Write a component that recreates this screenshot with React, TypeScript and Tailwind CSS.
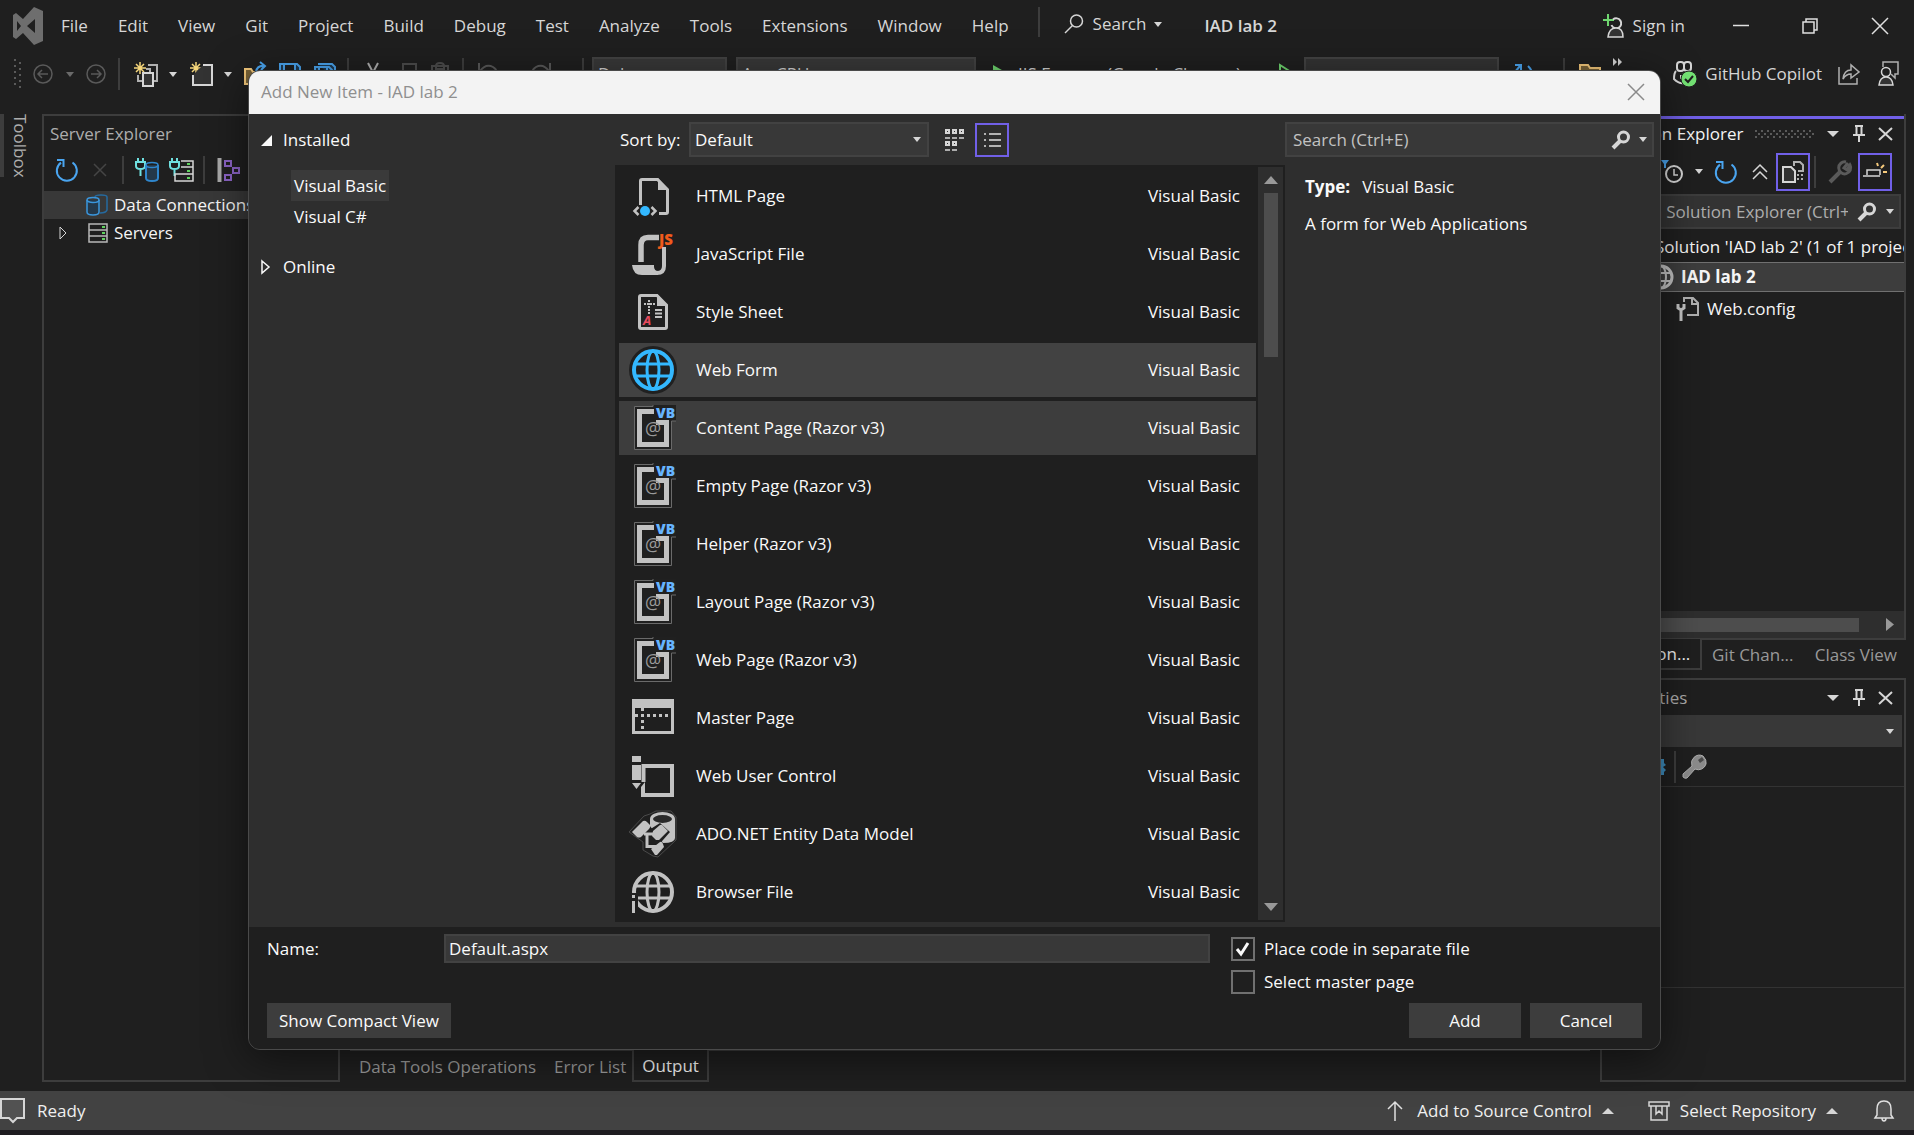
import { useState } from 'react';
import type { ReactNode } from 'react';

const menus = ['File', 'Edit', 'View', 'Git', 'Project', 'Build', 'Debug', 'Test', 'Analyze', 'Tools', 'Extensions', 'Window', 'Help'];

const templates = [
  { name: 'HTML Page', icon: 'html' },
  { name: 'JavaScript File', icon: 'js' },
  { name: 'Style Sheet', icon: 'css' },
  { name: 'Web Form', icon: 'form' },
  { name: 'Content Page (Razor v3)', icon: 'razor' },
  { name: 'Empty Page (Razor v3)', icon: 'razor' },
  { name: 'Helper (Razor v3)', icon: 'razor' },
  { name: 'Layout Page (Razor v3)', icon: 'razor' },
  { name: 'Web Page (Razor v3)', icon: 'razor' },
  { name: 'Master Page', icon: 'master' },
  { name: 'Web User Control', icon: 'control' },
  { name: 'ADO.NET Entity Data Model', icon: 'ado' },
  { name: 'Browser File', icon: 'browser' },
];

function Svg({ w, h, className, children }: { w: number; h: number; className?: string; children: ReactNode }) {
  return (
    <svg width={w} height={h} viewBox={`0 0 ${w} ${h}`} fill="none" className={`shrink-0 overflow-visible ${className ?? ''}`} aria-hidden="true">
      {children}
    </svg>
  );
}

function Caret({ color = '#d6d6d6', up = false, big = false }: { color?: string; up?: boolean; big?: boolean }) {
  const w = big ? 12 : 8;
  const h = big ? 6 : 5;
  return (
    <Svg w={w} h={h}>
      <path d={up ? `M0 ${h}H${w}L${w / 2} 0Z` : `M0 0H${w}L${w / 2} ${h}Z`} fill={color} />
    </Svg>
  );
}

function Sep({ className = 'h-8' }: { className?: string }) {
  return <div className={`w-[2px] shrink-0 bg-[#3d3d3d] ${className}`} />;
}

function Magnifier() {
  return (
    <Svg w={20} h={20}>
      <circle cx="12.5" cy="7" r="5" stroke="#d6d6d6" strokeWidth="3" />
      <path d="M9 11L2 18" stroke="#d6d6d6" strokeWidth="4" />
    </Svg>
  );
}

function Refresh() {
  return (
    <Svg w={24} h={24}>
      <path d="M17.5 4.5A10 10 0 1 1 6 4.6" stroke="#4aa5f0" strokeWidth="2" />
      <path d="M2 2H8.500V9" stroke="#4aa5f0" strokeWidth="2" />
    </Svg>
  );
}

function GlobeLines({ color, width }: { color: string; width: number }) {
  return (
    <g stroke={color} strokeWidth={width}>
      <circle cx="24" cy="24" r="19" strokeWidth="4" />
      <ellipse cx="24" cy="24" rx="6" ry="19" />
      <path d="M6 18H42M6 30H42" />
    </g>
  );
}

function TemplateIcon({ kind }: { kind: string }) {
  const c = '#c2c2c2';
  return (
    <Svg w={48} h={48}>
      {kind === 'html' && (
        <>
          <path d="M11.500 33V9Q11.500 7.500 13 7.500H28.500L38.500 17.500V40Q38.500 41.500 37 41.500H30" stroke={c} strokeWidth="3" />
          <path d="M29 6V18H40Z" fill={c} />
          <path d="M9.500 35L5.500 39L9.500 43M22.500 35L26.500 39L22.500 43" stroke={c} strokeWidth="2.500" />
          <circle cx="16" cy="39" r="5" fill="#33b8ff" />
        </>
      )}
      {kind === 'js' && (
        <>
          <path d="M12 32V15Q12 7.500 19 7.500H30" stroke={c} strokeWidth="5.500" />
          <path d="M35 17V36Q35 43 28 43" stroke={c} strokeWidth="4" />
          <path d="M3 35H25V37Q25.500 41 29 41V45H13Q4 45 3 35Z" fill={c} />
          <text x="30" y="15" fontSize="15" fontWeight="800" fill="#f05a1c">JS</text>
        </>
      )}
      {kind === 'css' && (
        <>
          <path d="M10.500 9Q10.500 7.500 12 7.500H28L37.500 17V39Q37.500 40.500 36 40.500H12Q10.500 40.500 10.500 39Z" stroke={c} strokeWidth="3" />
          <path d="M28 6V18H39Z" fill={c} />
          <path d="M15 16H27" stroke={c} strokeWidth="2" strokeDasharray="2 1" />
          <path d="M20 12V27" stroke={c} strokeWidth="2" strokeDasharray="2 1" />
          <path d="M26 22H33M26 25.500H33M26 29H33" stroke={c} strokeWidth="2" />
          <text x="14" y="37" fontSize="13" fontWeight="700" fontStyle="italic" fill="#e84a5f">A</text>
        </>
      )}
      {kind === 'form' && (
        <>
          <circle cx="24" cy="24" r="24" fill="#202020" />
          <GlobeLines color="#33b8ff" width={3} />
        </>
      )}
      {kind === 'razor' && (
        <>
          <path d="M24 2.500H5.500V45.500H42.500V17H47V1H24Z" fill="#202020" />
          <path d="M24 1V2.500H5.500V45.500H42.500V17H47" stroke="#6a6a6a" />
          <path d="M25 7.500H10.500V40.500H37.500V18.500H27" stroke={c} strokeWidth="5" />
          <text x="24" y="31" fontSize="18" textAnchor="middle" fill="#9a9a9a">@</text>
          <text x="27" y="14" fontSize="14" fontWeight="800" fill="#66b4ff">VB</text>
        </>
      )}
      {kind === 'master' && (
        <>
          <path d="M3 5H45V40H3ZM6 14V37H42V14Z" fill={c} fillRule="evenodd" />
          <path d="M6 21.500H41" stroke={c} strokeWidth="3" strokeDasharray="3 3" />
          <path d="M13.500 14V36" stroke={c} strokeWidth="3" strokeDasharray="3 3" />
        </>
      )}
      {kind === 'control' && (
        <>
          <path d="M3 4H12V10H3ZM3 13H12V28H3ZM3 31H12L7.500 37Z" fill={c} />
          <path d="M14.500 30V14H43V43H14V35" stroke={c} strokeWidth="4" />
          <path d="M12 35L16 30V45H12Z" fill={c} />
        </>
      )}
      {kind === 'ado' && (
        <>
          <path d="M0 22L15 6L21 4L27 1H42L47 7V30L29 47L24 46L14 40V32Z" stroke="#4a4a4a" />
          <path d="M21 9V16L34 33Q46 33 46 28V9Z" fill={c} />
          <ellipse cx="33.500" cy="9" rx="11" ry="5.500" fill="#2a2a2a" stroke={c} strokeWidth="3" />
          <path d="M20 31V20L31 13L41 22L27 38H18Z" fill="#202020" />
          <path d="M3 22L14 11Q16 10 18 12L21 15Q22 17 20 19L12 27Q10 28 8 27Z" fill={c} />
          <path d="M24 21L31 15Q33 14 34 16L39 21L30 30H27L23 26Z" fill={c} />
          <path d="M22 39L31 32Q33 31 34 34L35 37L28 45H26Z" fill={c} />
          <path d="M15 24H25M18 24V36.500H28" stroke={c} strokeWidth="3" />
        </>
      )}
      {kind === 'browser' && (
        <>
          <GlobeLines color={c} width={3} />
          <path d="M0 25H9V48H0Z" fill="#1f1f1f" />
          <path d="M3 27H6V30H3ZM3 33H6V45H3Z" fill={c} />
        </>
      )}
    </Svg>
  );
}

function PanelButtons() {
  return (
    <div className="flex items-center gap-3 pr-[11px]">
      <button aria-label="Window position" className="flex w-4 justify-center"><Caret big /></button>
      <button aria-label="Auto hide" className="flex w-3 justify-center">
        <Svg w={12} h={18}>
          <path d="M3.500 1V10M2 1H10M8.500 1V10M0 10H12M6 10V17" stroke="#d6d6d6" strokeWidth="2" />
        </Svg>
      </button>
      <button aria-label="Close" className="flex w-4 justify-center">
        <Svg w={15} h={14}><path d="M1 1L14 13M14 1L1 13" stroke="#d6d6d6" strokeWidth="2" /></Svg>
      </button>
    </div>
  );
}

function MenuBar() {
  return (
    <header className="flex h-[52px] items-center text-[#d6d6d6]">
      <Svg w={30} h={38} className="ml-[13px] mr-[3px]">
        <path d="M21 0L30 4V34L21 38L10 26L3 32L0 30V8L3 6L10 12ZM22 12L14 19L22 26ZM4 14V24L8 19Z" fill="#6e6e6e" fillRule="evenodd" />
      </Svg>
      <nav className="flex">
        {menus.map((m) => (
          <button key={m} className="px-[15px]">{m}</button>
        ))}
      </nav>
      <Sep className="-mt-2 ml-[14px] h-[30px]" />
      <button className="-mt-1 ml-6 flex items-center">
        <Svg w={20} h={20} className="mr-[9px]">
          <circle cx="12.500" cy="7" r="6" stroke="#d6d6d6" strokeWidth="1.500" />
          <path d="M8.500 11.500L1 19" stroke="#d6d6d6" strokeWidth="1.500" />
        </Svg>
        <span className="mr-2">Search</span>
        <Caret />
      </button>
      <span className="ml-[42px] font-semibold">IAD lab 2</span>
      <div className="ml-auto flex items-center">
        <button className="mr-[48px] flex items-center gap-2">
          <Svg w={22} h={24}>
            <path d="M5 0V12M0 6H11" stroke="#6fd66f" strokeWidth="2" />
            <path d="M10 5.500A5 5 0 1 1 8.500 11" stroke="#d6d6d6" strokeWidth="2" />
            <path d="M5 23Q6 14 13 14Q20 14 20 23Z" stroke="#d6d6d6" strokeWidth="1.500" fill="#333" />
          </Svg>
          Sign in
        </button>
        <button aria-label="Minimize" className="mr-[53px]"><Svg w={16} h={16}><path d="M0 7.500H16" stroke="#e0e0e0" strokeWidth="1.500" /></Svg></button>
        <button aria-label="Restore" className="mr-[53px]">
          <Svg w={17} h={17}><path d="M1 4H12V15H1ZM4 4V1H15V12H12" stroke="#e0e0e0" strokeWidth="1.500" /></Svg>
        </button>
        <button aria-label="Close window" className="mr-[26px]"><Svg w={16} h={16}><path d="M0 0L16 16M16 0L0 16" stroke="#e0e0e0" strokeWidth="1.500" /></Svg></button>
      </div>
    </header>
  );
}

function Toolbar() {
  return (
    <div className="flex h-[62px] text-[#d6d6d6]">
      <div className="flex h-[44px] w-[590px] shrink-0 items-center">
        <Svg w={8} h={30} className="ml-[14px] mr-[11px]">
          <path d="M1 0V30" stroke="#5a5a5a" strokeWidth="2" strokeDasharray="2 4" />
          <path d="M6 3V30" stroke="#5a5a5a" strokeWidth="2" strokeDasharray="2 4" />
        </Svg>
        <button aria-label="Navigate backward" className="mr-[13px]">
          <Svg w={20} h={20}><circle cx="10" cy="10" r="9" stroke="#5a5a5a" strokeWidth="1.500" /><path d="M15 10H5M9 6L5 10L9 14" stroke="#5a5a5a" strokeWidth="1.500" /></Svg>
        </button>
        <Caret color="#6a6a6a" />
        <button aria-label="Navigate forward" className="ml-3 mr-3">
          <Svg w={20} h={20}><circle cx="10" cy="10" r="9" stroke="#5a5a5a" strokeWidth="1.500" /><path d="M5 10H15M11 6L15 10L11 14" stroke="#5a5a5a" strokeWidth="1.500" /></Svg>
        </button>
        <Sep />
        <button aria-label="New project" className="ml-[14px] mr-[10px]">
          <Svg w={25} h={25}>
            <path d="M6 0V12M0 6H12M2 2L10 10M10 2L2 10" stroke="#f5d67b" strokeWidth="1.500" />
            <path d="M14 3H23V19H20M4 13V19H8" stroke="#b0b0b0" strokeWidth="2" />
            <path d="M12 7H16V10" stroke="#b0b0b0" strokeWidth="2" />
            <path d="M9 11H19V24H9Z" stroke="#d6d6d6" strokeWidth="2" fill="#333" />
          </Svg>
        </button>
        <Caret />
        <button aria-label="New item" className="ml-[13px] mr-[11px]">
          <Svg w={23} h={24}>
            <path d="M6 0V12M0 6H12M2 2L10 10M10 2L2 10" stroke="#f5d67b" strokeWidth="1.500" />
            <path d="M13 3H22V23H3V13" stroke="#d6d6d6" strokeWidth="2" fill="#333" />
          </Svg>
        </button>
        <Caret />
        <button aria-label="Open" className="ml-3 mr-[11px]">
          <Svg w={24} h={24}><path d="M1 22V7H7L9 10H16L12 22Z" stroke="#f5c97b" strokeWidth="2" fill="#7a6438" /><path d="M12 10Q13 3 21 4M16 0L21 4L17 8" stroke="#4aa5f0" strokeWidth="2" /></Svg>
        </button>
        <button aria-label="Save" className="mr-[13px]">
          <Svg w={22} h={22}><path d="M1 1H18L21 4V21H1ZM5 1V10H16V1" stroke="#4aa5f0" strokeWidth="2" fill="#1f3a52" /></Svg>
        </button>
        <button aria-label="Save all" className="mr-[11px]">
          <Svg w={22} h={22}><path d="M4 1H18L21 4V17M1 4H15L18 7V21H1ZM5 4V12H13V4" stroke="#4aa5f0" strokeWidth="2" fill="#1f3a52" /></Svg>
        </button>
        <Sep />
        <button aria-label="Cut" className="ml-[18px] mr-4"><Svg w={12} h={22}><path d="M1 0L9 15M11 0L3 15" stroke="#b0b0b0" strokeWidth="2" /></Svg></button>
        <button aria-label="Copy" className="mr-[14px]"><Svg w={22} h={22}><path d="M8 9V1H21V14H14M1 8H14V21H1Z" stroke="#4d4d4d" strokeWidth="2" /></Svg></button>
        <button aria-label="Paste" className="mr-[13px]"><Svg w={18} h={24}><path d="M1 4H17V23H1ZM5 4Q5 1 9 1T13 4V7H5Z" stroke="#4d4d4d" strokeWidth="2" /></Svg></button>
        <Sep />
        <button aria-label="Undo" className="ml-[14px] mr-[35px]"><Svg w={19} h={22}><path d="M1 0V9H10M2 8Q8 0 15 4T15 16L9 21" stroke="#5a5a5a" strokeWidth="2" /></Svg></button>
        <button aria-label="Redo" className="mr-[31px]"><Svg w={19} h={22}><path d="M18 0V9H9M17 8Q11 0 4 4T4 16L10 21" stroke="#5a5a5a" strokeWidth="2" /></Svg></button>
        <Sep />
      </div>
      <div className="flex h-[44px] min-w-0 flex-1 items-center">
        <select aria-label="Configuration" className="ml-[2px] h-[34px] w-[135px] appearance-none border-2 border-[#424242] bg-[#383838] pl-1 text-[#d6d6d6]"><option>Debug</option></select>
        <select aria-label="Platform" className="ml-[9px] h-[34px] w-[240px] appearance-none border-2 border-[#424242] bg-[#383838] pl-1 text-[#d6d6d6]"><option>Any CPU</option></select>
        <button className="ml-4 flex items-center whitespace-nowrap">
          <Svg w={18} h={22} className="mr-2"><path d="M1 2L17 11L1 21Z" fill="#6fd66f" /></Svg>
          IIS Express (Google Chrome)
        </button>
        <button aria-label="Start without debugging" className="ml-auto mr-2"><Svg w={18} h={22}><path d="M2 2L16 11L2 20Z" stroke="#6fd66f" strokeWidth="2" /></Svg></button>
        <select aria-label="Startup" className="mr-[14px] h-[34px] w-[195px] appearance-none border-2 border-[#424242] bg-[#333]" />
        <Svg w={22} h={22}><path d="M2 2H8V9M7 3L2 9M15 3Q22 10 18 19" stroke="#4aa5f0" strokeWidth="2" /></Svg>
        <Sep className="ml-[28px] mr-[14px] h-8" />
        <Svg w={22} h={22}><path d="M1 20V2H9L11 5H21V20Z" stroke="#f5c97b" strokeWidth="2" fill="#7a6438" /></Svg>
        <Svg w={10} h={8} className="mb-6 ml-3 mr-[50px]"><path d="M0 0L4 4L0 8ZM5 0L9 4L5 8Z" fill="#d6d6d6" /></Svg>
      </div>
      <div className="flex h-[44px] items-center pr-[14px]">
        <button className="flex items-center gap-2">
          <Svg w={24} h={28}>
            <rect x="4" y="2" width="7" height="9" rx="3" stroke="#d6d6d6" strokeWidth="2" />
            <rect x="11" y="2" width="7" height="9" rx="3" stroke="#d6d6d6" strokeWidth="2" />
            <path d="M3 11Q1 13 1 19Q6 24 11 23M8 15V19" stroke="#d6d6d6" strokeWidth="2" />
            <circle cx="16" cy="19" r="8" fill="#74e374" stroke="#1f1f1f" />
            <path d="M12 19L15 22L20 16" stroke="#1f1f1f" strokeWidth="2" />
          </Svg>
          GitHub Copilot
        </button>
        <button aria-label="Share" className="ml-4">
          <Svg w={22} h={22}>
            <path d="M1 4V21H19V15" stroke="#b0b0b0" strokeWidth="1.500" />
            <path d="M5 16Q6 7 13 7V2L21 9L13 15V11Q8 11 5 16Z" stroke="#b0b0b0" strokeWidth="1.500" />
          </Svg>
        </button>
        <button aria-label="Feedback" className="ml-[18px]">
          <Svg w={22} h={26}>
            <path d="M5 6V1H20V13H17V17L13 13" stroke="#b0b0b0" strokeWidth="1.500" />
            <circle cx="8" cy="11" r="4.500" stroke="#d6d6d6" strokeWidth="1.500" />
            <path d="M1 24Q2 16 8 16T15 24Z" stroke="#d6d6d6" strokeWidth="1.500" fill="#333" />
          </Svg>
        </button>
      </div>
    </div>
  );
}

function ServerExplorer() {
  return (
    <section className="w-[298px] shrink-0 border-2 border-[#3d3d3d]">
      <h2 className="h-[35px] pl-[6px] leading-[35px] text-[#adadad]">Server Explorer</h2>
      <div className="flex h-10 items-center pb-[2px] pl-[11px]">
        <Refresh />
        <Svg w={14} h={14} className="ml-[14px] mr-[15px]"><path d="M1 1L13 13M13 1L1 13" stroke="#454545" strokeWidth="1.500" /></Svg>
        <Sep className="h-7" />
        <Svg w={24} h={24} className="ml-[11px]">
          <path d="M3 0V4M8 0V4M1 4H10V8Q10 11 5.500 11T1 8ZM5.500 11V18" stroke="#6fe0e0" strokeWidth="2" />
          <path d="M11 7V20Q11 23 17 23T23 20V7" stroke="#2f86cc" strokeWidth="2" fill="#24384a" />
          <ellipse cx="17" cy="7" rx="6" ry="2.500" stroke="#2f86cc" strokeWidth="1.500" />
        </Svg>
        <Svg w={25} h={25} className="ml-[10px] mr-[9px]">
          <path d="M3 0V4M8 0V4M1 4H10V8Q10 11 5.500 11T1 8ZM5.500 11V18" stroke="#6fe0e0" strokeWidth="2" />
          <path d="M12 3H24V9H12M12 9H24V16H12M6 20V16H24V23H6Z" stroke="#d6d6d6" strokeWidth="1.500" />
          <path d="M18 6H21M18 13H21M18 20H21" stroke="#5fd35f" strokeWidth="2" />
        </Svg>
        <Sep className="h-7" />
        <Svg w={23} h={24} className="ml-3">
          <path d="M2.500 0V24" stroke="#a8a8a8" strokeWidth="4" />
          <path d="M8 3H14V8H8ZM8 17H14V22H8ZM16 10H22V15H16Z" stroke="#8a63c4" strokeWidth="2" />
        </Svg>
      </div>
      <ul className="text-[#f5f5f5]">
        <li className="flex h-7 items-center bg-[#383838] pl-[42px]">
          <Svg w={22} h={22} className="mr-[6px]">
            <path d="M9 3Q9 1 15 1T21 3V16Q20 19 14 19" stroke="#256a9f" strokeWidth="1.500" />
            <path d="M1 6V18Q1 21 7 21T13 18V6" stroke="#3a96dd" strokeWidth="1.500" fill="#24384a" />
            <ellipse cx="7" cy="6" rx="6" ry="2.500" stroke="#3a96dd" strokeWidth="1.500" />
          </Svg>
          <span className="whitespace-nowrap">Data Connections</span>
        </li>
        <li className="flex h-7 items-center pl-[15px]">
          <Svg w={9} h={14} className="mr-[20px]"><path d="M1 1L7 7L1 13Z" stroke="#d6d6d6" /></Svg>
          <Svg w={20} h={20} className="mr-[6px]">
            <path d="M1 1H19V19H1ZM1 7H19M1 13H19" stroke="#b8b8b8" strokeWidth="1.500" />
            <path d="M14 4H17M14 10H17M14 16H17" stroke="#5fd35f" strokeWidth="2" />
          </Svg>
          Servers
        </li>
      </ul>
    </section>
  );
}

function SolutionExplorer() {
  return (
    <section className="flex h-[526px] flex-col border-2 border-t-0 border-[#3d3d3d]">
      <div className="mt-[2px] h-[3px] bg-[#7160e8]" />
      <div className="flex h-[30px] items-center">
        <h2 className="mr-3 whitespace-nowrap pl-[5px] text-[#f5f5f5]">Solution Explorer</h2>
        <Svg w={60} h={9} className="mr-auto">
          <path d="M0 1H60M0 7H60" stroke="#5a5a5a" strokeWidth="2" strokeDasharray="2 4" />
          <path d="M3 4H60" stroke="#5a5a5a" strokeWidth="2" strokeDasharray="2 4" />
        </Svg>
        <PanelButtons />
      </div>
      <div className="flex h-[45px] items-center justify-end pr-3">
        <Svg w={22} h={24}>
          <path d="M0 0H8L5 4V8H3V4Z" fill="#4aa5f0" />
          <circle cx="13" cy="14" r="8" stroke="#d6d6d6" strokeWidth="2" />
          <path d="M13 9V15H17" stroke="#d6d6d6" strokeWidth="1.500" />
        </Svg>
        <div className="ml-[12px] mr-[11px]"><Caret /></div>
        <Refresh />
        <Svg w={16} h={16} className="ml-[14px] mr-2"><path d="M1 8L8 1L15 8M1 15L8 8L15 15" stroke="#d6d6d6" strokeWidth="1.500" /></Svg>
        <button aria-label="Show all files" className="flex h-[38px] w-[34px] items-center justify-center border-2 border-[#7160e8]">
          <Svg w={22} h={22}>
            <path d="M1 6H9L13 10V21H1Z" stroke="#d6d6d6" strokeWidth="2" fill="#333" />
            <path d="M12 5V1H18L21 4V10H16" stroke="#b0b0b0" strokeWidth="2" />
            <path d="M16 13V21M20 13V21" stroke="#b0b0b0" strokeWidth="2" strokeDasharray="2 2" />
          </Svg>
        </button>
        <Sep className="ml-1 mr-3 h-8" />
        <Svg w={24} h={24}><path d="M2 22L12 12" stroke="#5a5a5a" strokeWidth="4" /><path d="M20 3L16 8L19 10L22 5A6 6 0 1 1 18 2" stroke="#5a5a5a" strokeWidth="3" /></Svg>
        <button aria-label="Preview selected items" className="ml-[6px] flex h-[38px] w-[34px] items-center justify-center border-2 border-[#7160e8]">
          <Svg w={24} h={18}>
            <path d="M0 13H17M4 12V7H17V12" stroke="#d6d6d6" strokeWidth="1.500" />
            <path d="M14 0L15 3M21 2L18 5M24 9H20" stroke="#f5c97b" strokeWidth="2" />
          </Svg>
        </button>
      </div>
      <div className="mr-[3px] flex h-[35px] shrink-0 items-center border-2 border-[#3d3d3d] bg-[#333]">
        <input aria-label="Search Solution Explorer" placeholder="Search Solution Explorer (Ctrl+;)" className="ml-1 mr-[9px] w-0 flex-1 bg-transparent text-[#adadad] outline-none placeholder:text-[#adadad]" />
        <Magnifier />
        <div className="ml-[9px] mr-[5px]"><Caret /></div>
      </div>
      <ul className="mt-[3px] flex-1 overflow-hidden whitespace-nowrap text-[#f5f5f5]">
        <li className="h-[30px] pl-[53px] leading-[30px]">Solution 'IAD lab 2' (1 of 1 project)</li>
        <li className="flex h-[30px] items-center border-y border-[#707070] bg-[#3d3d3d] pl-[47px] font-bold">
          <Svg w={26} h={26} className="mr-[6px]">
            <circle cx="12" cy="13" r="11" stroke="#c2c2c2" strokeWidth="3" />
            <ellipse cx="12" cy="13" rx="5" ry="11" stroke="#c2c2c2" strokeWidth="2" />
            <path d="M2 9H22M2 17H22" stroke="#c2c2c2" strokeWidth="2" />
          </Svg>
          IAD lab 2
        </li>
        <li className="flex h-[33px] items-center pl-[74px]">
          <Svg w={24} h={26} className="mr-[7px]">
            <path d="M8 6V2H17L22 7V19H11" stroke="#b0b0b0" strokeWidth="2" />
            <path d="M16 2V8H22" stroke="#b0b0b0" strokeWidth="2" />
            <path d="M2 8V12L5 14L8 12V8M5 14V25" stroke="#c2c2c2" strokeWidth="3" />
          </Svg>
          Web.config
        </li>
      </ul>
      <div className="flex h-[27px] shrink-0 items-center bg-[#2e2e2e] pr-[10px]">
        <div className="h-[14px] flex-1 bg-[#4d4d4d]" />
        <Svg w={8} h={13} className="ml-[27px]"><path d="M0 0L8 6.500L0 13Z" fill="#999" /></Svg>
      </div>
    </section>
  );
}

function Properties() {
  return (
    <section className="mt-[9px] flex flex-1 flex-col border-2 border-[#3d3d3d]">
      <div className="flex h-[35px] items-center justify-between">
        <h2 className="pl-[3px] text-[#adadad]">Properties</h2>
        <PanelButtons />
      </div>
      <div className="mr-[2px] flex h-8 items-center justify-end bg-[#383838] pr-2"><Caret /></div>
      <div className="flex h-[39px] items-center pl-[48px]">
        <Svg w={16} h={18}><path d="M0 1H14V5L16 7L13 9L16 12L14 14V17H0Z" fill="#3f8fc0" /></Svg>
        <Sep className="ml-[8px] mr-[6px] h-8" />
        <Svg w={25} h={25}>
          <path d="M1 20L10 12A8 8 0 0 1 21 2Q25 6 24 10A8 8 0 0 1 13 15L5 24Q3 25 1 23Z" fill="#8c8c8c" stroke="#b0b0b0" />
          <path d="M16 6L20 3L22 6L18 9Z" fill="#4a4a4a" />
        </Svg>
      </div>
      <div className="flex-1 border-y border-[#333]" />
      <div className="h-[92px]" />
    </section>
  );
}

function Dialog() {
  const [selected, setSelected] = useState('Web Form');
  const [name, setName] = useState('Default.aspx');
  const [separate, setSeparate] = useState(true);
  const [master, setMaster] = useState(false);

  const box = 'h-6 w-6 appearance-none border-2 border-[#707070] bg-[#1f1f1f]';

  return (
    <div role="dialog" aria-labelledby="dlg-title" className="absolute left-[248px] right-[253px] top-[70px] overflow-hidden rounded-[12px] border border-[#4a4a4a] bg-[#2e2e2e] text-[#fafafa] shadow-[0_8px_40px_rgba(0,0,0,0.5)]">
      <div className="flex h-[43px] items-center justify-between bg-[#f3f3f3] pb-[2px] pl-3 pr-4 text-[#8f8f8f]">
        <h1 id="dlg-title">Add New Item - IAD lab 2</h1>
        <button aria-label="Close dialog"><Svg w={16} h={16}><path d="M0 0L16 16M16 0L0 16" stroke="#8a8a8a" strokeWidth="1.500" /></Svg></button>
      </div>

      <div className="flex h-[813px]">
        <nav className="w-[366px] shrink-0 pl-3 pt-[10px]">
          <div className="flex h-8 items-center">
            <Svg w={11} h={11} className="mr-[11px]"><path d="M11 0V11H0Z" fill="#fafafa" /></Svg>
            Installed
          </div>
          <div className="ml-[30px] mt-[14px] flex flex-col items-start">
            <button className="h-[31px] bg-[#3a3a3a] px-[3px]">Visual Basic</button>
            <button className="h-[31px] px-[3px]">Visual C#</button>
          </div>
          <div className="mt-[19px] flex h-8 items-center">
            <Svg w={9} h={14} className="mr-[13px]"><path d="M1 1L8 7L1 13Z" stroke="#fafafa" strokeWidth="1.500" /></Svg>
            Online
          </div>
        </nav>

        <div className="flex min-w-0 flex-1 flex-col">
          <div className="flex h-[51px] items-center pl-[5px]">
            <label htmlFor="sort" className="w-[69px]">Sort by:</label>
            <div className="relative">
              <select id="sort" className="h-[35px] w-[240px] appearance-none border-2 border-[#424242] bg-[#383838] pl-1">
                <option>Default</option>
              </select>
              <div className="pointer-events-none absolute right-2 top-[15px]"><Caret /></div>
            </div>
            <button aria-label="Small icons" className="ml-4 mr-[10px]">
              <Svg w={20} h={22}>
                <path d="M1 1H4V4H1ZM8 1H11V4H8ZM15 1H18V4H15ZM1 13H4V16H1ZM8 13H11V16H8Z" stroke="#d6d6d6" strokeWidth="2" />
                <path d="M0 9H5M7 9H12M14 9H19M0 21H5M7 21H12" stroke="#d6d6d6" strokeWidth="1.500" />
              </Svg>
            </button>
            <button aria-label="List" className="flex h-[34px] w-[34px] items-center justify-center border-2 border-[#7160e8]">
              <Svg w={17} h={16}>
                <path d="M0 2H2M0 8H2M0 14H2M5 2H17M5 8H17M5 14H17" stroke="#e0e0e0" strokeWidth="1.500" />
              </Svg>
            </button>
          </div>
          <div className="mb-[5px] flex flex-1 bg-[#1f1f1f]">
            <div className="flex flex-1 flex-col gap-1 pl-1 pt-1">
              {templates.map((t) => (
                <button
                  key={t.name}
                  onClick={() => setSelected(t.name)}
                  className={`flex h-[54px] items-center pl-[10px] pr-4 ${t.name === selected ? 'bg-[#424242]' : t.name === 'Content Page (Razor v3)' ? 'bg-[#3d3d3d]' : ''}`}
                >
                  <TemplateIcon kind={t.icon} />
                  <span className="ml-[19px] mr-auto">{t.name}</span>
                  <span>Visual Basic</span>
                </button>
              ))}
            </div>
            <div className="my-[2px] ml-[2px] mr-[2px] flex w-[25px] flex-col items-center bg-[#2e2e2e] py-[9px]">
              <Svg w={14} h={8}><path d="M0 8H14L7 0Z" fill="#999" /></Svg>
              <div className="mt-[9px] h-[164px] w-[14px] bg-[#4d4d4d]" />
              <Svg w={14} h={8} className="mt-auto"><path d="M0 0H14L7 8Z" fill="#999" /></Svg>
            </div>
          </div>
        </div>

        <aside className="w-[375px] shrink-0 pt-2">
          <div className="mr-[6px] flex h-[35px] items-center border-2 border-[#424242] bg-[#383838] pl-[6px] pr-[5px]">
            <input aria-label="Search templates" placeholder="Search (Ctrl+E)" className="w-0 flex-1 bg-transparent outline-none placeholder:text-[#c2c2c2]" />
            <Magnifier />
            <div className="ml-2"><Caret /></div>
          </div>
          <p className="ml-5 mt-[18px]"><b className="mr-3">Type:</b>Visual Basic</p>
          <p className="ml-5 mt-[13px]">A form for Web Applications</p>
        </aside>
      </div>

      <div className="bg-[#1f1f1f] px-[18px] pb-[11px] pt-[7px]">
        <div className="flex items-start">
          <label htmlFor="name" className="w-[177px] leading-[30px]">Name:</label>
          <input id="name" value={name} onChange={(e) => setName(e.target.value)} className="h-[29px] w-0 flex-1 border-2 border-[#424242] bg-[#383838] pl-[3px] outline-none" />
          <div className="ml-[21px] mt-[3px] flex w-[411px] flex-col gap-[9px]">
            <label className="flex h-6 items-center gap-[9px]">
              <span className="relative flex">
                <input type="checkbox" checked={separate} onChange={() => setSeparate(!separate)} className={box} />
                {separate && (
                  <span className="pointer-events-none absolute left-[5px] top-[5px]">
                    <Svg w={14} h={14}><path d="M1 7L5 12L12 1" stroke="#fafafa" strokeWidth="3" /></Svg>
                  </span>
                )}
              </span>
              Place code in separate file
            </label>
            <label className="flex h-6 items-center gap-[9px]">
              <input type="checkbox" checked={master} onChange={() => setMaster(!master)} className={box} />
              Select master page
            </label>
          </div>
        </div>
        <div className="mt-[9px] flex h-[35px] gap-[9px]">
          <button className="mr-auto bg-[#3d3d3d] px-3">Show Compact View</button>
          <button className="w-[112px] bg-[#3d3d3d]">Add</button>
          <button className="w-[112px] bg-[#3d3d3d]">Cancel</button>
        </div>
      </div>
    </div>
  );
}

export default function App() {
  return (
    <div className="relative flex min-h-screen flex-col overflow-hidden bg-[#1f1f1f] font-['Open_Sans',sans-serif] text-[17px] leading-6">
      <MenuBar />
      <Toolbar />

      <main className="flex flex-1 pb-[9px]">
        <div className="flex w-[42px] shrink-0 items-start">
          <div className="h-[63px] w-1 bg-[#3d3d3d]" />
          <button className="ml-1 text-[#adadad] [writing-mode:vertical-rl]">Toolbox</button>
        </div>
        <ServerExplorer />
        <div className="ml-[10px] mr-[10px] flex min-w-0 flex-1 flex-col justify-end text-[#999]">
          <div className="flex h-[33px] items-start border-t-2 border-[#3d3d3d]">
            <button className="pl-[9px] pt-1">Data Tools Operations</button>
            <button className="pl-[18px] pr-[6px] pt-1">Error List</button>
            <button className="-mt-[2px] h-[33px] border-2 border-t-0 border-[#3d3d3d] bg-[#1f1f1f] px-2 pt-[2px] text-[#f5f5f5]">Output</button>
          </div>
        </div>
        <div className="mr-[8px] flex w-[306px] shrink-0 flex-col">
          <SolutionExplorer />
          <div className="flex h-[29px] items-center whitespace-nowrap text-[#999]">
            <button className="h-[31px] w-[102px] border-2 border-t-0 border-[#3d3d3d] bg-[#1f1f1f] text-[#f5f5f5]">Solution...</button>
            <button className="ml-[10px]">Git Chan...</button>
            <button className="ml-auto mr-[9px]">Class View</button>
          </div>
          <Properties />
        </div>
      </main>

      <footer className="border-b-[5px] border-[#1e1c20] bg-[#424242] text-[#f0f0f0]">
        <div className="flex h-[39px] items-center">
          <Svg w={26} h={26} className="mr-[11px]"><path d="M1 1H24V20H17L13 24L9 20H1Z" stroke="#d6d6d6" strokeWidth="2" fill="#525252" /></Svg>
          <span>Ready</span>
          <button className="ml-auto flex items-center">
            <Svg w={16} h={20} className="mr-[14px]"><path d="M8 20V1M1 8L8 1L15 8" stroke="#e0e0e0" strokeWidth="1.500" /></Svg>
            <span className="mr-[10px]">Add to Source Control</span>
            <Caret up big />
          </button>
          <button className="ml-[34px] flex items-center">
            <Svg w={22} h={20} className="mr-[10px]">
              <path d="M1 1H21V5H1ZM3 5V19H19V5M8 5V13L11 10L14 13V5" stroke="#d6d6d6" strokeWidth="1.500" />
            </Svg>
            <span className="mr-[10px]">Select Repository</span>
            <Caret up big />
          </button>
          <button aria-label="Notifications" className="ml-[36px] mr-5">
            <Svg w={20} h={22}><path d="M1 18L3 15V9Q3 1 10 1T17 9V15L19 18ZM8 18Q8 21 10 21T12 18" stroke="#e0e0e0" strokeWidth="1.500" fill="#525252" /></Svg>
          </button>
        </div>
      </footer>

      <Dialog />
    </div>
  );
}
